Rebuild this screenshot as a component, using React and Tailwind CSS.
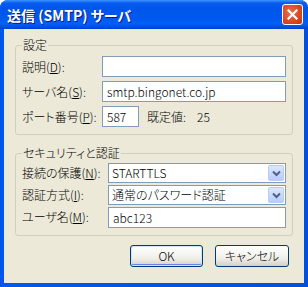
import React from "react";

function Label({ children }) {
  return <div className="flex items-center h-full whitespace-nowrap">{children}</div>;
}

function TextBox({ value, className = "" }) {
  return (
    <div className={"h-[21px] bg-white border border-[#7F9DB9] flex items-center pl-[4px] " + className}>
      <span className="leading-none">{value}</span>
    </div>
  );
}

function Combo({ value }) {
  return (
    <div className="h-[20px] bg-white border border-[#7F9DB9] flex items-center pl-[3px] pr-[1px]">
      <span className="flex-1 leading-none">{value}</span>
      <div className="w-[16px] h-[16px] rounded-[2px] border border-[#B9CCF4] bg-[linear-gradient(to_bottom,#DCE7FE,#B7CCF9)] flex items-center justify-center">
        <svg width="9" height="7" viewBox="0 0 9 7">
          <path d="M1 1.5 L4.5 5 L8 1.5" fill="none" stroke="#4D6185" strokeWidth="2" />
        </svg>
      </div>
    </div>
  );
}

export default function App() {
  return (
    <div className="w-[308px] h-[287px] flex flex-col rounded-t-[8px] overflow-hidden bg-[linear-gradient(to_right,#0054E3,#0058EE_3px,#0050DE)] text-[12px] font-light text-black [font-family:'Noto_Sans_CJK_JP',sans-serif] [font-feature-settings:'palt']">
      <div className="h-[29px] shrink-0 flex items-center justify-between pl-[7px] pr-[5px] bg-[linear-gradient(to_bottom,#3D95FF_0px,#0A5CF0_3px,#0055EA_8px,#0058EE_18px,#0160F6_24px,#0048DA_28px,#003DCC_29px)]">
        <span className="text-white font-bold text-[14px] leading-none [text-shadow:1px_1px_0_#0A1883]">送信 (SMTP) サーバ</span>
        <div className="w-[21px] h-[21px] rounded-[3px] border border-white bg-[radial-gradient(circle_at_40%_40%,#E8704E,#D4411B_70%,#C23512)] flex items-center justify-center">
          <svg width="11" height="11" viewBox="0 0 11 11">
            <path d="M1.5 1.5 L9.5 9.5 M9.5 1.5 L1.5 9.5" stroke="white" strokeWidth="2.2" strokeLinecap="square" />
          </svg>
        </div>
      </div>
      <div className="flex-1 mx-[4px] mb-[4px] bg-[#ECE9D8] px-[11px] pt-[9px] flex flex-col">
        <fieldset className="border border-[#D0D0BF] rounded-[3px] px-[6px] pt-[4px] pb-[7px]">
          <legend className="ml-[0px] px-[1px] leading-[14px]">設定</legend>
          <div className="grid grid-cols-[80px_1fr] gap-y-[4px] auto-rows-[21px]">
            <Label>説明(<u>D</u>):</Label>
            <TextBox value="" />
            <Label>サーバ名(<u>S</u>):</Label>
            <TextBox value="smtp.bingonet.co.jp" />
            <Label>ポート番号(<u>P</u>):</Label>
            <div className="flex items-center">
              <TextBox value="587" className="w-[37px]" />
              <span className="ml-[8px]">既定値:</span>
              <span className="ml-[11px]">25</span>
            </div>
          </div>
        </fieldset>
        <fieldset className="mt-[11px] border border-[#D0D0BF] rounded-[3px] px-[6px] pt-[3px] pb-[8px]">
          <legend className="ml-[0px] px-[1px] leading-[14px]">セキュリティと認証</legend>
          <div className="grid grid-cols-[86px_1fr] gap-y-[2px] auto-rows-[20px]">
            <Label>接続の保護(<u>N</u>):</Label>
            <Combo value="STARTTLS" />
            <Label>認証方式(<u>I</u>):</Label>
            <Combo value="通常のパスワード認証" />
            <Label>ユーザ名(<u>M</u>):</Label>
            <TextBox value="abc123" />
          </div>
        </fieldset>
        <div className="mt-[9px] flex justify-end gap-[12px] pr-[4px]">
          <button className="w-[73px] h-[22px] rounded-[3px] border border-[#003C74] bg-[linear-gradient(to_bottom,#FFFFFF,#F0F0EA_60%,#D6D0C5)] shadow-[inset_0_0_0_1px_#CEE7FF,inset_0_-1px_0_1px_#6982EE] flex items-center justify-center leading-none">OK</button>
          <button className="w-[74px] h-[22px] rounded-[3px] border border-[#003C74] bg-[linear-gradient(to_bottom,#FFFFFF,#F0F0EA_60%,#D6D0C5)] flex items-center justify-center leading-none">キャンセル</button>
        </div>
      </div>
    </div>
  );
}
